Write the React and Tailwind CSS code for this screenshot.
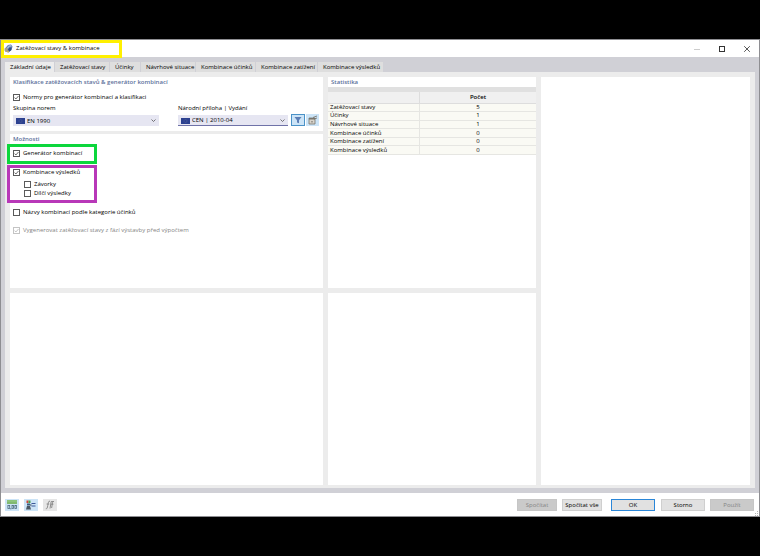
import React, { useState } from 'react';
import clsx from 'clsx';

const TABS = [
  { label: 'Základní údaje', width: 'w-[50px]' },
  { label: 'Zatěžovací stavy', width: 'w-[55px]' },
  { label: 'Účinky', width: 'w-[31px]' },
  { label: 'Návrhové situace', width: 'w-[55px]' },
  { label: 'Kombinace účinků', width: 'w-[60px]' },
  { label: 'Kombinace zatížení', width: 'w-[62px]' },
  { label: 'Kombinace výsledků', width: 'w-[66px]' },
];

const STATS = [
  { label: 'Zatěžovací stavy', count: 5 },
  { label: 'Účinky', count: 1 },
  { label: 'Návrhové situace', count: 1 },
  { label: 'Kombinace účinků', count: 0 },
  { label: 'Kombinace zatížení', count: 0 },
  { label: 'Kombinace výsledků', count: 0 },
];

function AppIcon() {
  return (
    <svg viewBox="0 0 18 18" className="size-[9px] shrink-0" aria-hidden="true">
      <path d="M2 9 8 2l6-1 3 4-2 7-6 5-5-2z" fill="#5574a8" />
      <path d="M5 8 9 3l5-1 2 3-5 1-3 5z" fill="#9db8dc" />
      <path d="M1 9l4-2 3 3-1 5-4 1-2-3z" fill="#a5a18e" />
      <path d="M8 10l4-3 3 2-1 4-4 2z" fill="#2f4f86" />
      <circle cx="8" cy="15" r="2" fill="#d4b556" />
    </svg>
  );
}

function Flag() {
  return (
    <svg viewBox="0 0 18 12" className="absolute left-[3px] top-[3px] w-[9px] h-[6px]" aria-hidden="true">
      <rect width="18" height="12" fill="#2c4190" />
      <circle cx="9" cy="6" r="3" fill="none" stroke="#7d83a0" strokeWidth="1" strokeDasharray="1 1" />
    </svg>
  );
}

function Check({ label, defaultChecked = false, disabled = false }) {
  return (
    <label className={clsx('flex items-center gap-[3px] h-[9px] whitespace-nowrap', disabled ? 'text-[#858585]' : 'text-black')}>
      <span className="relative size-[7px] shrink-0">
        <input
          type="checkbox"
          defaultChecked={defaultChecked}
          disabled={disabled}
          className="peer block appearance-none size-[7px] border border-[#5a5a5a] bg-white disabled:border-[#c4c4c4]"
        />
        <svg
          viewBox="0 0 8 8"
          className={clsx('absolute inset-0 size-[7px] pointer-events-none invisible peer-checked:visible', disabled ? 'text-[#b5b5b5]' : 'text-[#444444]')}
          aria-hidden="true"
        >
          <path d="M1.8 4.1 3.3 5.7 6.3 2.3" fill="none" stroke="currentColor" strokeWidth="0.9" />
        </svg>
      </span>
      {label}
    </label>
  );
}

function SelectField({ id, label, value, className, active }) {
  return (
    <div className={className}>
      <label htmlFor={id} className="block h-[11px] text-black whitespace-nowrap">{label}</label>
      <div className="relative">
        <Flag />
        <select
          id={id}
          className={clsx('block w-full h-[11px] appearance-none bg-[#e6e6f2] pl-[14px] text-black leading-[10px] outline-none', active && 'border-b border-[#6f72a8]')}
        >
          <option>{value}</option>
        </select>
        <svg viewBox="0 0 10 6" className="absolute right-[3px] top-[4px] w-[5px] h-[3px] pointer-events-none" aria-hidden="true">
          <path d="M1 1l4 4 4-4" fill="none" stroke="#555555" strokeWidth="1.6" />
        </svg>
      </div>
    </div>
  );
}

function SectionTitle({ children }) {
  return <h2 className="h-[10px] leading-[10px] px-[3px] font-semibold text-[#5d719b] whitespace-nowrap">{children}</h2>;
}

function FooterButton({ children, className, primary, disabled }) {
  return (
    <button
      type="button"
      disabled={disabled}
      className={clsx(
        'h-[12px] leading-[10px] text-center whitespace-nowrap border',
        primary ? 'border-[#2a86d8] bg-[#e1e1e1] text-black' : disabled ? 'border-[#c6c6c6] bg-[#cacaca] text-[#858585]' : 'border-[#cfcfcf] bg-[#e1e1e1] text-black',
        className
      )}
    >
      {children}
    </button>
  );
}

export default function App() {
  const [activeTab, setActiveTab] = useState(0);

  return (
    <div className="min-h-screen flex flex-col bg-black pt-[39px] pb-[39px] font-['Open_Sans','Noto_Sans',sans-serif] text-[6px] leading-[9px] text-black">
      <div className="flex-1 flex flex-col bg-[#d0d0d6] border border-[#8e8e92]">
        {/* Title bar */}
        <header className="flex items-center justify-between bg-white h-[17px]">
          <h1 className="flex items-center gap-[3px] h-[18px] w-[121px] border-3 border-[#fff000] whitespace-nowrap">
            <AppIcon />
            Zatěžovací stavy &amp; kombinace
          </h1>
          <div className="flex items-center gap-[17px] pr-[8px]">
            <button type="button" aria-label="Minimalizovat">
              <svg viewBox="0 0 8 8" className="size-[8px]"><path d="M1 4.5h6" stroke="#cccccc" /></svg>
            </button>
            <button type="button" aria-label="Maximalizovat">
              <svg viewBox="0 0 8 8" className="size-[8px]"><rect x="1.5" y="1.5" width="5" height="5" fill="none" stroke="#333333" /></svg>
            </button>
            <button type="button" aria-label="Zavřít">
              <svg viewBox="0 0 8 8" className="size-[8px]"><path d="M1.2 1.2l5.6 5.6M6.8 1.2 1.2 6.8" stroke="#444444" strokeWidth="0.9" /></svg>
            </button>
          </div>
        </header>

        <div className="flex-1 flex flex-col pt-[5px] px-[4px] pb-[5px]">
          {/* Tabs */}
          <div role="tablist" className="flex h-[10px]">
            {TABS.map((tab, i) => (
              <button
                key={tab.label}
                type="button"
                role="tab"
                aria-selected={i === activeTab}
                onClick={() => setActiveTab(i)}
                className={clsx(
                  'h-[10px] leading-[11px] pl-[5px] text-left whitespace-nowrap border-r border-[#d0d0d6]',
                  tab.width,
                  i === activeTab ? 'bg-[#ececec]' : 'bg-[#dedede]'
                )}
              >
                {tab.label}
              </button>
            ))}
          </div>

          {/* Panels */}
          <main className="flex-1 grid grid-cols-[313fr_208fr_209fr] grid-rows-[211fr_192fr] gap-[5px] bg-[#ececec] pt-[5px] px-[5px] pb-[3px]">
            <div className="flex flex-col gap-[3px]">
              <section className="bg-white h-[54px]">
                <SectionTitle>Klasifikace zatěžovacích stavů &amp; generátor kombinací</SectionTitle>
                <div className="px-[3px] pt-[6px]">
                  <Check label="Normy pro generátor kombinací a klasifikaci" defaultChecked />
                  <div className="flex items-end pt-[2px]">
                    <SelectField id="skupina" label="Skupina norem" value="EN 1990" className="w-[146px]" />
                    <SelectField id="priloha" label="Národní příloha | Vydání" value="CEN | 2010-04" className="w-[110px] ml-[19px]" active />
                    <button type="button" aria-label="Filtr" className="ml-[3px] w-[14px] h-[12px] flex items-center justify-center border border-[#4a92c8] bg-[#cce4f7]">
                      <svg viewBox="0 0 8 8" className="size-[8px]"><path d="M.5 1h7L5 4.2v3L3 6.4V4.2z" fill="#5b7db5" /></svg>
                    </button>
                    <button type="button" aria-label="Nový" className="ml-px w-[13px] h-[12px] flex items-center justify-center bg-[#cce4f7]">
                      <svg viewBox="0 0 10 10" className="size-[10px]">
                        <path d="M1 3h6v6H1z" fill="#d8d4cc" stroke="#77746d" strokeWidth=".8" />
                        <path d="M1 3h6v1.5H1z" fill="#77746d" />
                        <path d="M3 6h2v1.5H3z" fill="#a09c94" />
                        <path d="M5 2.5 9 1M6 4l3-1" stroke="#77746d" strokeWidth=".9" />
                      </svg>
                    </button>
                  </div>
                </div>
              </section>

              <section className="flex-1 bg-white">
                <SectionTitle>Možnosti</SectionTitle>
                <div className="-ml-[3px] w-[90px] h-[20px] border-3 border-[#0cd63c] px-[3px] pt-[2px]">
                  <Check label="Generátor kombinací" defaultChecked />
                </div>
                <div className="-ml-[3px] mt-px w-[90px] h-[38px] border-3 border-[#b838b8] px-[3px]">
                  <Check label="Kombinace výsledků" defaultChecked />
                  <div className="pl-[11px] pt-[3px]">
                    <Check label="Závorky" />
                    <Check label="Dílčí výsledky" />
                  </div>
                </div>
                <div className="px-[3px] pt-[5px] flex flex-col gap-[9px]">
                  <Check label="Názvy kombinací podle kategorie účinků" />
                  <Check label="Vygenerovat zatěžovací stavy z fází výstavby před výpočtem" defaultChecked disabled />
                </div>
              </section>
            </div>

            <section className="bg-white">
              <SectionTitle>Statistika</SectionTitle>
              <table className="w-full h-[68px] table-fixed border-collapse">
                <colgroup>
                  <col className="w-[44%]" />
                  <col />
                </colgroup>
                <thead>
                  <tr className="h-[5px] bg-[#e0e0e0]">
                    <td colSpan={2} className="h-[5px] p-0 leading-[0px]" />
                  </tr>
                  <tr className="h-[11px] bg-[#f0f0f0]">
                    <td className="p-0 border-r border-b border-[#dddddd]" />
                    <th scope="col" className="p-0 font-semibold border-b border-[#dddddd]">Počet</th>
                  </tr>
                </thead>
                <tbody>
                  {STATS.map((row) => (
                    <tr key={row.label} className="bg-[#fafaf4]">
                      <th scope="row" className="p-0 pl-[2px] leading-[7px] text-left font-normal border-r border-b border-[#e6e6e2]">{row.label}</th>
                      <td className="p-0 leading-[7px] text-center border-b border-[#e6e6e2]">{row.count}</td>
                    </tr>
                  ))}
                </tbody>
              </table>
            </section>

            <section className="bg-white row-span-2" />
            <section className="bg-white" />
            <section className="bg-white" />
          </main>
        </div>

        {/* Footer */}
        <footer className="relative flex items-center justify-between bg-white h-[23px] pl-[4px] pr-[5px]">
          <div className="flex gap-[5px]">
            <button type="button" aria-label="Jednotky" className="w-[14px] h-[12px] flex items-center justify-center bg-[#cce4f7]">
              <svg viewBox="0 0 10 10" className="size-[10px]">
                <rect x="0" y="0" width="10" height="4" fill="#8cc47c" />
                <path d="M1 2v2M3 2v2M5 2v2M7 2v2M9 2v2" stroke="#5f9a52" strokeWidth=".5" />
                <rect x=".9" y="5.4" width="1.8" height="3" fill="none" stroke="#4a6a7c" strokeWidth=".8" />
                <path d="M3.8 8v1.4" stroke="#4a6a7c" strokeWidth=".8" />
                <rect x="5" y="5.4" width="1.5" height="3" fill="none" stroke="#4a6a7c" strokeWidth=".8" />
                <rect x="7.9" y="5.4" width="1.5" height="3" fill="none" stroke="#4a6a7c" strokeWidth=".8" />
              </svg>
            </button>
            <button type="button" aria-label="Zobrazení" className="w-[14px] h-[12px] flex items-center justify-center bg-[#cce4f7]">
              <svg viewBox="0 0 10 10" className="size-[10px]">
                <path d="M.5.5h2V3h-2z" fill="#d04a3a" />
                <path d="M2.5.5h2V3h-2z" fill="#49a04c" />
                <path d="M1 3.5h3v2H1z" fill="#38597c" />
                <path d="M1 6h3l1 3.5H0z" fill="#4a5663" />
                <path d="M5.5 3.5H9.5M5.5 6H9.5" stroke="#3d5a99" strokeWidth="1" />
                <path d="M4 5h1.5" stroke="#333f4c" />
              </svg>
            </button>
            <button type="button" aria-label="Funkce" disabled className="w-[14px] h-[12px] flex items-center justify-center bg-[#e6e6e6]">
              <svg viewBox="0 0 10 10" className="size-[10px]">
                <path d="M5 1.2C3.4.6 3.3 3 2.8 5.3 2.4 8 2 9 .8 8.8M1.6 4h2.6" fill="none" stroke="#858585" strokeWidth=".9" />
                <path d="M9 1.5H6.2L5 8.5M5.8 4.2h2.6M7.6 2.2l-1 5.8" fill="none" stroke="#858585" strokeWidth=".9" />
              </svg>
            </button>
          </div>
          <div className="flex">
            <FooterButton className="w-[40px]" disabled>Spočítat</FooterButton>
            <FooterButton className="w-[40px] ml-[5px]">Spočítat vše</FooterButton>
            <FooterButton className="w-[44px] ml-[9px]" primary>OK</FooterButton>
            <FooterButton className="w-[44px] ml-[6px]">Storno</FooterButton>
            <FooterButton className="w-[44px] ml-[5px]" disabled>Použít</FooterButton>
          </div>
          {/* Resize grip */}
          <svg viewBox="0 0 5 5" className="absolute right-0 bottom-0 size-[5px]" aria-hidden="true">
            <path d="M3 0h1v1H3zM3 2h1v1H3zM1 2h1v1H1zM3 4h1v1H3zM1 4h1v1H1z" fill="#b5b5b5" />
          </svg>
        </footer>
      </div>
    </div>
  );
}
